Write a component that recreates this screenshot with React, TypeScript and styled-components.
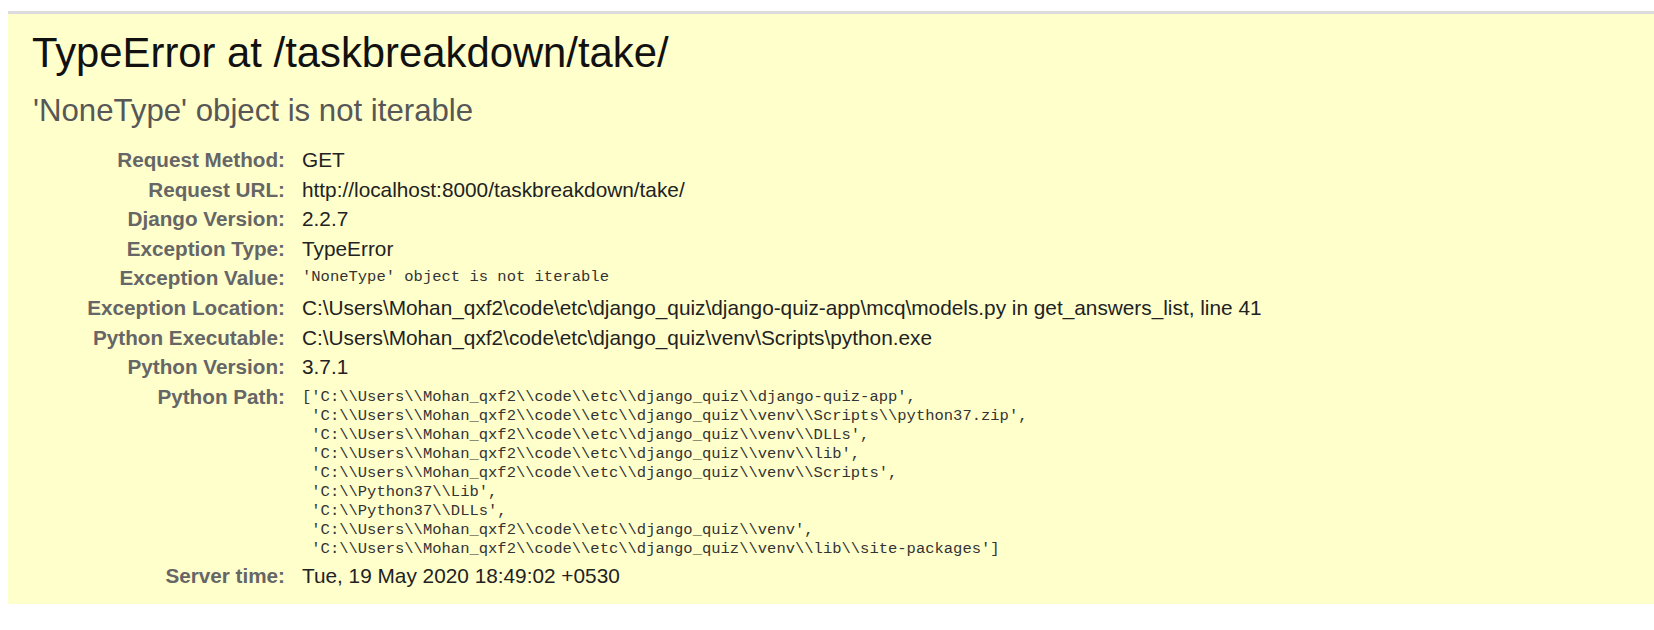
import React from "react";
import styled, { createGlobalStyle } from "styled-components";

const GlobalStyle = createGlobalStyle`
  html, body {
    margin: 0;
    padding: 0;
    background: #ffffff;
  }
  body {
    font-family: "Liberation Sans", Arial, sans-serif;
    color: #000;
  }
`;

const Page = styled.div`
  width: 1654px;
  height: 630px;
  padding-top: 11px;
  padding-left: 8px;
  box-sizing: border-box;
  overflow: hidden;
`;

const Summary = styled.section`
  background: #ffffcc;
  border-top: 3px solid #dcdcde;
  height: 593px;
  box-sizing: border-box;
  padding: 15px 0 0 0;
`;

const Title = styled.h1`
  margin: 0;
  padding-left: 24px;
  font-weight: normal;
  font-size: 41.8px;
  line-height: 48px;
  color: #111;
`;

const ExceptionValue = styled.div`
  margin: 16px 0 0 0;
  padding-left: 25px;
  font-size: 31.2px;
  line-height: 36px;
  color: #575757;
`;

const Meta = styled.div`
  margin-top: 16px;
  display: grid;
  grid-template-columns: 277px 1fr;
  column-gap: 17px;
`;

const Row = styled.div`
  display: contents;
`;

const Label = styled.div`
  text-align: right;
  font-weight: bold;
  font-size: 20.7px;
  line-height: 29.6px;
  color: #666;
  white-space: nowrap;
`;

const Value = styled.div`
  font-size: 20.8px;
  line-height: 29.6px;
  color: #222;
  white-space: nowrap;
`;

const MonoValue = styled.pre<{ $block?: boolean }>`
  margin: 0;
  font-family: "Liberation Mono", "DejaVu Sans Mono", monospace;
  font-size: 15.5px;
  line-height: ${(p) => (p.$block ? "19px" : "29.6px")};
  padding-top: ${(p) => (p.$block ? "6px" : "0")};
  padding-bottom: ${(p) => (p.$block ? "2px" : "0")};
  color: #333;
  white-space: pre;
`;

const rows: { label: string; value: string; mono?: boolean }[] = [
  { label: "Request Method:", value: "GET" },
  { label: "Request URL:", value: "http://localhost:8000/taskbreakdown/take/" },
  { label: "Django Version:", value: "2.2.7" },
  { label: "Exception Type:", value: "TypeError" },
  { label: "Exception Value:", value: "'NoneType' object is not iterable", mono: true },
  {
    label: "Exception Location:",
    value:
      "C:\\Users\\Mohan_qxf2\\code\\etc\\django_quiz\\django-quiz-app\\mcq\\models.py in get_answers_list, line 41",
  },
  {
    label: "Python Executable:",
    value: "C:\\Users\\Mohan_qxf2\\code\\etc\\django_quiz\\venv\\Scripts\\python.exe",
  },
  { label: "Python Version:", value: "3.7.1" },
];

const pythonPath = [
  "['C:\\\\Users\\\\Mohan_qxf2\\\\code\\\\etc\\\\django_quiz\\\\django-quiz-app',",
  " 'C:\\\\Users\\\\Mohan_qxf2\\\\code\\\\etc\\\\django_quiz\\\\venv\\\\Scripts\\\\python37.zip',",
  " 'C:\\\\Users\\\\Mohan_qxf2\\\\code\\\\etc\\\\django_quiz\\\\venv\\\\DLLs',",
  " 'C:\\\\Users\\\\Mohan_qxf2\\\\code\\\\etc\\\\django_quiz\\\\venv\\\\lib',",
  " 'C:\\\\Users\\\\Mohan_qxf2\\\\code\\\\etc\\\\django_quiz\\\\venv\\\\Scripts',",
  " 'C:\\\\Python37\\\\Lib',",
  " 'C:\\\\Python37\\\\DLLs',",
  " 'C:\\\\Users\\\\Mohan_qxf2\\\\code\\\\etc\\\\django_quiz\\\\venv',",
  " 'C:\\\\Users\\\\Mohan_qxf2\\\\code\\\\etc\\\\django_quiz\\\\venv\\\\lib\\\\site-packages']",
].join("\n");

export default function App() {
  return (
    <>
      <GlobalStyle />
      <Page>
        <Summary>
          <Title>TypeError at /taskbreakdown/take/</Title>
          <ExceptionValue>'NoneType' object is not iterable</ExceptionValue>
          <Meta>
            {rows.map((r) => (
              <Row key={r.label}>
                <Label>{r.label}</Label>
                {r.mono ? <MonoValue>{r.value}</MonoValue> : <Value>{r.value}</Value>}
              </Row>
            ))}
            <Row>
              <Label>Python Path:</Label>
              <MonoValue $block>{pythonPath}</MonoValue>
            </Row>
            <Row>
              <Label>Server time:</Label>
              <Value>Tue, 19 May 2020 18:49:02 +0530</Value>
            </Row>
          </Meta>
        </Summary>
      </Page>
    </>
  );
}
